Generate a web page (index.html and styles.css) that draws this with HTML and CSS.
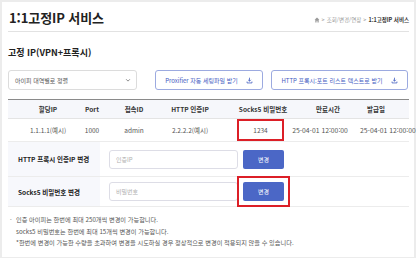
FILE: index.html
```html
<!DOCTYPE html>
<html lang="ko">
<head>
<meta charset="utf-8">
<link rel="stylesheet" href="styles.css">
</head>
<body>
<div class="card">
  <div class="page-head">
    <h1 class="title">1:1고정IP 서비스</h1>
    <div class="crumbs">
      <svg class="home" viewBox="0 0 10 10" width="6" height="6"><path d="M5 1 L1 4.6 H2.2 V9 H4.2 V6.4 H5.8 V9 H7.8 V4.6 H9 Z" fill="#999"/></svg>
      <span class="sep">&gt;</span>
      <span>조회/변경/연장</span>
      <span class="sep">&gt;</span>
      <span class="cur">1:1고정IP 서비스</span>
    </div>
  </div>

  <h2 class="sec-title">고정 IP(VPN+프록시)</h2>

  <div class="toolbar">
    <div class="select">
      <span>아이피 대역별로 정렬</span>
      <svg viewBox="0 0 8 8" width="6" height="6"><path d="M1.5 3 L4 5.5 L6.5 3" fill="none" stroke="#666" stroke-width="1"/></svg>
    </div>
    <div class="btns">
      <button class="dl dl-1">Proxifier 자동 세팅파일 받기
        <svg viewBox="0 0 10 10" width="7" height="7"><path d="M5 1 V6 M3 4 L5 6 L7 4 M1.5 6.5 V8.5 H8.5 V6.5" fill="none" stroke="#3f5bbf" stroke-width="1.1"/></svg>
      </button>
      <button class="dl dl-2">HTTP 프록시:포트 리스트 텍스트로 받기
        <svg viewBox="0 0 10 10" width="7" height="7"><path d="M5 1 V6 M3 4 L5 6 L7 4 M1.5 6.5 V8.5 H8.5 V6.5" fill="none" stroke="#3f5bbf" stroke-width="1.1"/></svg>
      </button>
    </div>
  </div>

  <div class="table">
    <div class="row head">
      <div>할당IP</div><div>Port</div><div>접속ID</div><div>HTTP 인증IP</div><div>Socks5 비밀번호</div><div>만료시간</div><div>발급일</div>
    </div>
    <div class="row data">
      <div>1.1.1.1(예시)</div><div>1000</div><div class="plain">admin</div><div>2.2.2.2(예시)</div><div><span class="mark">1234</span></div><div class="date d1">25-04-01 12:00:00</div><div class="date d2">25-04-01 12:00:00</div>
    </div>
    <div class="form-row r1">
      <div class="label">HTTP 프록시 인증IP 변경</div>
      <div class="field">
        <div class="input">인증IP</div>
        <button class="change">변경</button>
      </div>
    </div>
    <div class="form-row r2">
      <div class="label">Socks5 비밀번호 변경</div>
      <div class="field">
        <div class="input">비밀번호</div>
        <span class="marked"><button class="change">변경</button></span>
      </div>
    </div>
  </div>

  <ul class="notes">
    <li class="bullet">인증 아이피는 한번에 최대 250개씩 변경이 가능합니다.</li>
    <li>socks5 비밀번호는 한번에 최대 15개씩 변경이 가능합니다.</li>
    <li>*한번에 변경이 가능한 수량을 초과하여 변경을 시도하실 경우 정상적으로 변경이 적용되지 않을 수 있습니다.</li>
  </ul>
</div>
</body>
</html>
```

FILE: styles.css
```css
* { box-sizing: border-box; }
html, body { margin: 0; padding: 0; }
body {
  background: #ececec;
  font-family: "Noto Sans CJK KR", "Noto Sans", sans-serif;
  color: #333;
  width: 416px;
  height: 258px;
  overflow: hidden;
}
.card {
  margin: 2px 2px 0 2px;
  height: 255px;
  background: #fff;
  padding: 0 5px 0 6px;
}
.page-head {
  height: 30px;
  display: flex;
  justify-content: space-between;
  align-items: flex-end;
  border-bottom: 1px solid #e2e2e2;
  padding-bottom: 5px;
}
.title {
  margin: 0 0 0 1px;
  font-size: 13px;
  font-weight: 700;
  line-height: 16px;
  color: #222;
  letter-spacing: -0.1px;
}
.crumbs {
  display: flex;
  align-items: center;
  gap: 2px;
  font-size: 5.5px;
  color: #999;
  line-height: 8px;
  margin-bottom: 2px;
}
.crumbs .cur { color: #333; font-weight: 700; }
.sec-title {
  margin: 15px 0 0 0;
  font-size: 9px;
  font-weight: 700;
  line-height: 12px;
  color: #222;
}
.toolbar {
  margin-top: 11px;
  display: flex;
  height: 20px;
}
.select {
  width: 129px;
  height: 20px;
  border: 1px solid #dcdcdc;
  border-radius: 3px;
  display: flex;
  align-items: center;
  justify-content: space-between;
  padding: 0 5px 0 6px;
  font-size: 6px;
  color: #555;
}
.btns {
  margin-left: auto;
  display: flex;
  gap: 8px;
  margin-right: 1px;
}
.dl {
  height: 20px;
  border: 1px solid #9caae0;
  border-radius: 3px;
  background: #fff;
  color: #3f5bbf;
  font-family: inherit;
  font-size: 6px;
  display: flex;
  align-items: center;
  justify-content: center;
  gap: 8px;
  padding: 0;
}
.dl-1 { width: 108px; }
.dl-2 { width: 137px; }
.table {
  margin-top: 9px;
  border-top: 1px solid #8a8a8a;
}
.row {
  display: grid;
  grid-template-columns: 18px 44px 44px 40px 72px 74px 56px 40px;
  align-items: center;
  text-align: center;
  font-size: 6.5px;
  white-space: nowrap;
}
.row::before { content: ""; }
.head {
  height: 19px;
  background: #f6f7fb;
  border-bottom: 1px solid #e4e4e4;
  font-weight: 700;
  color: #333;
}
.data {
  height: 23px;
  color: #555;
  border-bottom: 1px solid #ececec;
}
.data .plain { color: #555; }
.data .date { font-size: 6.8px; }
.data .d1 { margin-left: -10px; margin-right: 6px; }
.data .d2 { margin-left: 4px; margin-right: -8px; }
.mark {
  display: inline-block;
  width: 43px;
  height: 18px;
  line-height: 18px;
  outline: 2px solid #dc1f27;
  margin-left: -5px;
}
.form-row {
  display: flex;
  border-bottom: 1px solid #ececec;
}
.r1 { height: 35px; }
.r2 { height: 30px; }
.label {
  width: 92px;
  background: #f7f8fc;
  font-size: 6.5px;
  font-weight: 700;
  color: #222;
  display: flex;
  align-items: center;
  padding-left: 10px;
}
.field {
  display: flex;
  align-items: center;
  gap: 5px;
  padding-left: 9px;
}
.input {
  width: 129px;
  height: 19px;
  border: 1px solid #dddde6;
  border-radius: 3px;
  font-size: 6px;
  color: #b0b0b0;
  display: flex;
  align-items: center;
  padding-left: 6px;
}
.change {
  width: 41px;
  height: 19px;
  border: none;
  border-radius: 2px;
  background: #4b67c6;
  color: #fff;
  font-family: inherit;
  font-size: 6px;
  padding: 0;
  display: block;
}
.marked {
  display: block;
  outline: 2px solid #dc1f27;
  outline-offset: 4px;
}
.notes {
  list-style: none;
  margin: 7px 0 0 0;
  padding: 0 0 0 8px;
  font-size: 6.2px;
  line-height: 11.5px;
  color: #555;
}
.notes .bullet { position: relative; }
.notes .bullet::before {
  content: "·";
  position: absolute;
  left: -6px;
}
```
